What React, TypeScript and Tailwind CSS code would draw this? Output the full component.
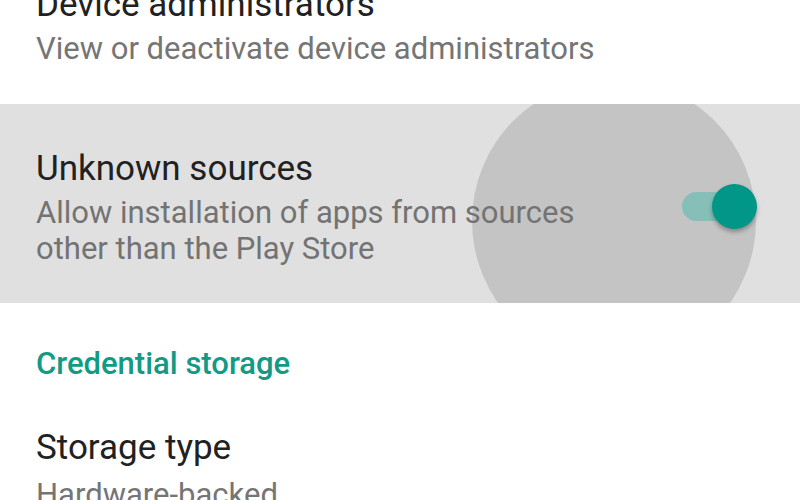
import React from "react";

export default function App() {
  return (
    <div className="w-[800px] h-[500px] overflow-hidden bg-white relative" style={{ fontFamily: "Roboto, 'Noto Sans', sans-serif" }}>
      {/* Device administrators row */}
      <div className="pl-[36px] mt-[-15px] pb-[37px]">
        <div className="text-[35px] leading-[40px] text-[#212121]">Device administrators</div>
        <div className="mt-[6px] text-[31px] leading-[36px] text-[#757575]">View or deactivate device administrators</div>
      </div>

      {/* Unknown sources row (pressed) */}
      <div className="relative h-[199px] bg-[#e0e0e0] overflow-hidden">
        <div className="absolute left-[472px] top-[-25px] w-[284px] h-[284px] rounded-full bg-[#c4c4c4]" />
        <div className="relative flex items-start justify-between pl-[36px] pt-[45px]">
          <div>
            <div className="text-[35px] leading-[40px] text-[#212121]">Unknown sources</div>
            <div className="mt-[6px] text-[31px] leading-[36px] text-[#737373]">
              Allow installation of apps from sources
              <br />
              other than the Play Store
            </div>
          </div>
        </div>
        {/* switch */}
        <div className="absolute left-[682px] top-[88px] w-[66px] h-[29px] rounded-full bg-[#86bfb8]" />
        <div className="absolute left-[712px] top-[80px] w-[45px] h-[45px] rounded-full bg-[#009688] shadow-[0_3px_4px_rgba(0,0,0,0.3)]" />
      </div>

      {/* Credential storage */}
      <div className="pl-[36px] pt-[43px]">
        <div className="text-[31px] leading-[36px] font-medium text-[#139a85]">Credential storage</div>
      </div>
      <div className="pl-[36px] pt-[46px]">
        <div className="text-[35px] leading-[40px] text-[#212121]">Storage type</div>
        <div className="mt-[9px] text-[31px] leading-[36px] text-[#757575]">Hardware-backed</div>
      </div>
    </div>
  );
}
